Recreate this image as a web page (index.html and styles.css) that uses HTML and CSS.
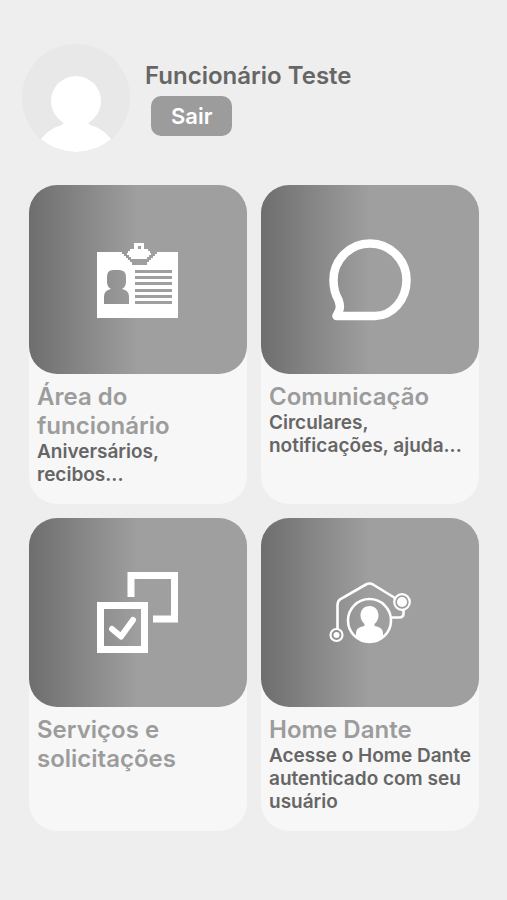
FILE: index.html
```
<!DOCTYPE html>
<html lang="pt-BR">
<head>
    <meta charset="UTF-8">
    <meta name="viewport" content="width=device-width, initial-scale=1.0">
    <title>Funcionário</title>
    <link rel="stylesheet" href="styles.css">
</head>
<body>
    <header class="profile">
        <svg class="avatar" viewBox="0 0 108 108" aria-hidden="true">
            <circle cx="54" cy="54" r="54" fill="#e8e8e8"/>
            <circle cx="54" cy="57" r="25" fill="#fff"/>
            <path d="M42 76h24c0 3 1 5 5 6 7 2 13 7 18 13a54 54 0 0 1-70 0c5-6 11-11 18-13 4-1 5-3 5-6z" fill="#fff"/>
        </svg>
        <div class="profile-info">
            <h1>Funcionário Teste</h1>
            <button type="button" class="logout">Sair</button>
        </div>
    </header>

    <!-- Main menu -->
    <main class="menu">
        <a href="#funcionario" class="card">
            <div class="tile">
                <svg class="icon" viewBox="0 0 82 82" aria-hidden="true">
                    <path fill="#fff" fill-rule="evenodd" d="M0 13h25v2h2v2h2v2h2v2h2v2h2v3h15v-3h2v-2h2v-2h2v-2h2v-2h2v-2h21v66H0z
                        M16 31h6q7 0 7 7v5q0 5-4 7q7 1 7 8v7H7v-7q0-7 7-8q-4-2-4-7v-5q0-7 6-7z
                        M38 31v3h37v-3zM38 37v3h37v-3zM38 43v3h37v-3zM38 50v3h37v-3zM38 56v3h37v-3zM38 62v3h37v-3z"/>
                    <path fill="#fff" fill-rule="evenodd" d="M37 4h10v6h4v2h2v2h1v2h-2v2h-2v2H34v-2h-2v-2h-2v-2h1v-2h2v-2h4zM41 7v3h3V7z"/>
                </svg>
            </div>
            <div class="card-text">
                <h2>Área do funcionário</h2>
                <p>Aniversários, recibos...</p>
            </div>
        </a>

        <a href="#comunicacao" class="card">
            <div class="tile">
                <svg class="icon" viewBox="0 0 82 82" aria-hidden="true">
                    <path fill="none" stroke="#fff" stroke-width="8.5" stroke-linejoin="round" d="M46 77H7.5C11 71 12 68 9.5 61C6 55 4.5 48 4.5 41A36.5 36.5 0 0 1 77.5 41C77.5 61 63 77 46 77z"/>
                </svg>
            </div>
            <div class="card-text">
                <h2>Comunicação</h2>
                <p>Circulares, notificações, ajuda...</p>
            </div>
        </a>

        <a href="#servicos" class="card">
            <div class="tile">
                <svg class="icon" viewBox="0 0 82 82" aria-hidden="true">
                    <g fill="none" stroke="#fff" stroke-width="7">
                        <rect x="3.5" y="33.5" width="44" height="44"/>
                        <path d="M34 25V3.500h43.500v43.500H56"/>
                        <path d="M15 57l9 7.500L36 48" stroke-width="6" stroke-linecap="round" stroke-linejoin="round"/>
                    </g>
                </svg>
            </div>
            <div class="card-text">
                <h2>Serviços e solicitações</h2>
            </div>
        </a>

        <a href="#home-dante" class="card">
            <div class="tile">
                <svg class="icon" viewBox="0 0 82 82" aria-hidden="true">
                    <g fill="none" stroke="#fff" stroke-width="2.6">
                        <circle cx="40.5" cy="48.5" r="21.5"/>
                        <circle cx="7.500" cy="63" r="6" stroke-width="2.2"/>
                        <circle cx="73" cy="30" r="7.8" stroke-width="2.2"/>
                        <path d="M8.500 57V33q0-4 3-6L37 12.500q3.500-2 7 0L66 26"/>
                        <path d="M62 45.500h8q4.500 0 4.500-4v-4"/>
                    </g>
                    <circle cx="7.500" cy="63" r="3" fill="#fff"/>
                    <circle cx="73" cy="30" r="5" fill="#fff"/>
                    <path fill="#fff" d="M40.500 34c5.500 0 9 4 9 9.500 0 4-2 6.500-4 8.500v2c6 1 8.500 3 8.500 8v2.500a21.500 21.500 0 0 1-27 0V62c0-5 2.500-7 8.500-8v-2c-2-2-4-4.500-4-8.500 0-5.500 3.500-9.500 9-9.500z"/>
                </svg>
            </div>
            <div class="card-text">
                <h2>Home Dante</h2>
                <p>Acesse o Home Dante autenticado com seu usuário</p>
            </div>
        </a>
    </main>
</body>
</html>
```

FILE: styles.css
```
* {
    box-sizing: border-box;
    margin: 0;
    padding: 0;
    font-family: Inter, "Liberation Sans", sans-serif;
}

body {
    background-color: #eee;
    color: #666;
}

/* Header */
.profile {
    display: flex;
    align-items: center;
    gap: 15px;
    padding: 44px 22px 33px;
}

.avatar {
    flex: none;
    width: 108px;
    height: 108px;
}

.profile-info {
    display: flex;
    flex-direction: column;
    align-items: flex-start;
    gap: 6px;
}

h1 {
    font-size: 24px;
    font-weight: 600;
    line-height: 29px;
}

.logout {
    margin-left: 6px;
    padding: 0 20px;
    height: 40px;
    border: none;
    border-radius: 10px;
    background-color: #9c9c9c;
    color: #fff;
    font-size: 22px;
    font-weight: 600;
    cursor: pointer;
}

/* Cards */
.menu {
    display: grid;
    grid-template-columns: 1fr 1fr;
    gap: 14px;
    padding: 0 28px 28px 29px;
}

.card {
    border-radius: 28px;
    background-color: #f7f7f7;
    color: inherit;
    text-decoration: none;
}

.tile {
    display: flex;
    align-items: center;
    justify-content: center;
    height: 189px;
    border-radius: 28px;
    background: linear-gradient(to right, #6e6e6e, #9f9f9f 50%);
}

.icon {
    width: 82px;
    height: 82px;
}

.card-text {
    padding: 8px 8px 18px;
}

.card h2 {
    color: #9c9c9c;
    font-size: 24px;
    font-weight: 600;
    line-height: 29px;
}

.card p {
    font-size: 19px;
    font-weight: 600;
    line-height: 23px;
}
```
